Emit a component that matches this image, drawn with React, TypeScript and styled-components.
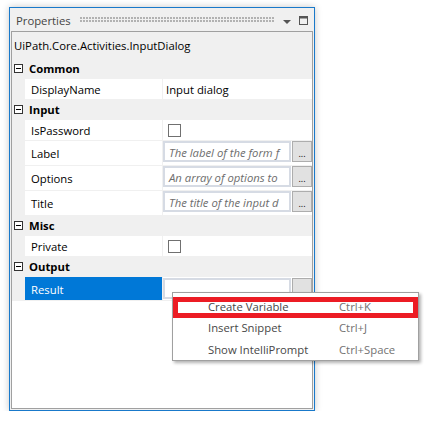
import React from 'react';
import styled, { createGlobalStyle } from 'styled-components';

const FONT = `"Open Sans", "Noto Sans", sans-serif`;

const Global = createGlobalStyle`
  html, body { margin: 0; padding: 0; background: #ffffff; }
  body { font-family: ${FONT}; font-size: 11.3px; color: #000; }
  * { box-sizing: border-box; }
`;

const Stage = styled.div`
  padding: 7px 0 0 9px;
`;

const Window = styled.div`
  position: relative;
  width: 306px;
  height: 404px;
  border: 1px solid #1979ca;
  background: #f0f0f0;
  box-shadow: 0 0 7px rgba(0, 0, 0, 0.22);
  display: flex;
  flex-direction: column;
  padding: 0 1px 1px 1px;
`;

const TitleBar = styled.div`
  height: 23px;
  display: flex;
  align-items: center;
  padding: 0 5px;
  flex-shrink: 0;
`;

const TitleText = styled.span`
  color: #444;
  white-space: nowrap;
  padding-top: 1px;
`;

const Grip = styled.div`
  flex: 1;
  height: 6px;
  margin: 1px 8px 0 9px;
  background-image: radial-gradient(circle at 1px 1px, #b0b0b0 0.7px, transparent 1.1px);
  background-size: 3px 3px;
`;

const TitleIcon = styled.svg`
  display: block;
  flex-shrink: 0;
`;

const Panel = styled.div`
  flex: 1;
  border: 1px solid #a0a0a0;
  background: #ffffff;
  display: flex;
  flex-direction: column;
`;

const ObjectHeader = styled.div`
  height: 26px;
  background: #f0f0f0;
  padding: 1px 0 0 2px;
  display: flex;
  align-items: center;
  white-space: nowrap;
`;

const Grid = styled.div`
  background: #f0f0f0;
  padding-bottom: 1px;
`;

const CategoryHeader = styled.div`
  height: 20px;
  display: flex;
  align-items: center;
  padding-left: 2px;
  font-weight: bold;
`;

const CategoryName = styled.span`
  margin-left: 6px;
  padding-top: 1px;
`;

const PropRow = styled.div<{ $h: number }>`
  display: grid;
  grid-template-columns: 137px 149px;
  column-gap: 1px;
  margin: 1px 0 0 13px;
  height: ${(p) => p.$h}px;
`;

const LabelCell = styled.div<{ $selected?: boolean }>`
  background: ${(p) => (p.$selected ? '#0078d7' : '#ffffff')};
  color: ${(p) => (p.$selected ? '#ffffff' : '#000000')};
  padding: 1px 0 0 6px;
  display: flex;
  align-items: center;
  white-space: nowrap;
`;

const ValueCell = styled.div<{ $top?: number }>`
  background: #ffffff;
  display: flex;
  align-items: ${(p) => (p.$top !== undefined ? 'flex-start' : 'center')};
  padding-top: ${(p) => p.$top ?? 0}px;
  white-space: nowrap;
  overflow: hidden;
`;

const ValueText = styled.span`
  padding: 1px 0 0 3px;
`;

const CheckBox = styled.div`
  width: 13px;
  height: 13px;
  border: 1px solid #707070;
  background: #fff;
  margin-left: 5px;
`;

const TextBox = styled.div`
  width: 128px;
  flex-shrink: 0;
  height: 21px;
  border: 2px solid #d6dbe4;
  background: #fff;
  padding: 1px 0 0 4px;
  display: flex;
  align-items: center;
  overflow: hidden;
  white-space: nowrap;
  font-style: italic;
  color: #6d6d6d;
`;

const EllipsisButton = styled.div`
  width: 20px;
  flex-shrink: 0;
  height: 21px;
  margin-left: 1px;
  border: 1px solid #adadad;
  background: #e1e1e1;
  display: flex;
  align-items: flex-end;
  justify-content: center;
  font-size: 9px;
  line-height: 12px;
  color: #000;
  padding-bottom: 1px;
`;

const Menu = styled.div`
  position: absolute;
  left: 162px;
  top: 284px;
  width: 247px;
  height: 69px;
  background: #fff;
  border: 1px solid #a0a0a0;
  box-shadow: 2px 2px 3px rgba(0, 0, 0, 0.3);
  padding-top: 1px;
  z-index: 5;
`;

const MenuItem = styled.div<{ $shift?: number }>`
  position: relative;
  z-index: 1;
  height: 22px;
  display: grid;
  grid-template-columns: 131px 1fr;
  align-items: center;
  padding: ${(p) => 1 + (p.$shift ?? 0)}px 0 0 35px;
  color: #474747;
  white-space: nowrap;
`;

const Shortcut = styled.span`
  color: #727272;
`;

const Highlight = styled.div`
  position: absolute;
  left: 0;
  top: 4px;
  width: 245px;
  height: 21px;
  border: 5px solid #ec1c24;
  pointer-events: none;
`;

const MinusBox = () => (
  <svg width="9" height="9" viewBox="0 0 9 9" style={{ display: 'block' }}>
    <rect x="0.5" y="0.5" width="8" height="8" fill="#fff" stroke="#333" />
    <line x1="2" y1="4.5" x2="7" y2="4.5" stroke="#000" />
  </svg>
);

type Prop =
  | { name: string; kind: 'text'; value: string }
  | { name: string; kind: 'check' }
  | { name: string; kind: 'expr'; placeholder: string; selected?: boolean };

const categories: { name: string; props: Prop[] }[] = [
  { name: 'Common', props: [{ name: 'DisplayName', kind: 'text', value: 'Input dialog' }] },
  {
    name: 'Input',
    props: [
      { name: 'IsPassword', kind: 'check' },
      { name: 'Label', kind: 'expr', placeholder: 'The label of the form f' },
      { name: 'Options', kind: 'expr', placeholder: 'An array of options to' },
      { name: 'Title', kind: 'expr', placeholder: 'The title of the input d' },
    ],
  },
  { name: 'Misc', props: [{ name: 'Private', kind: 'check' }] },
  { name: 'Output', props: [{ name: 'Result', kind: 'expr', placeholder: '', selected: true }] },
];

function PropertyRow({ p }: { p: Prop }) {
  if (p.kind === 'text') {
    return (
      <PropRow $h={20}>
        <LabelCell>{p.name}</LabelCell>
        <ValueCell>
          <ValueText>{p.value}</ValueText>
        </ValueCell>
      </PropRow>
    );
  }
  if (p.kind === 'check') {
    return (
      <PropRow $h={20}>
        <LabelCell>{p.name}</LabelCell>
        <ValueCell>
          <CheckBox />
        </ValueCell>
      </PropRow>
    );
  }
  return (
    <PropRow $h={p.selected ? 23 : 24}>
      <LabelCell $selected={p.selected}>{p.name}</LabelCell>
      <ValueCell $top={p.selected ? 1 : 0}>
        <TextBox>{p.placeholder}</TextBox>
        <EllipsisButton>...</EllipsisButton>
      </ValueCell>
    </PropRow>
  );
}

export default function App() {
  return (
    <>
      <Global />
      <Stage>
        <Window>
          <TitleBar>
            <TitleText>Properties</TitleText>
            <Grip />
            <TitleIcon width="8" height="4" viewBox="0 0 8 4" style={{ marginTop: 4 }}>
              <polygon points="0,0 8,0 4,4" fill="#555" />
            </TitleIcon>
            <TitleIcon width="9" height="9" viewBox="0 0 9 9" style={{ marginLeft: 8, marginTop: 1 }}>
              <rect x="0.5" y="0.5" width="8" height="8" fill="none" stroke="#555" />
              <rect x="0" y="0" width="9" height="2.5" fill="#555" />
            </TitleIcon>
          </TitleBar>
          <Panel>
            <ObjectHeader>UiPath.Core.Activities.InputDialog</ObjectHeader>
            <Grid>
              {categories.map((c) => (
                <React.Fragment key={c.name}>
                  <CategoryHeader>
                    <MinusBox />
                    <CategoryName>{c.name}</CategoryName>
                  </CategoryHeader>
                  {c.props.map((p) => (
                    <PropertyRow key={p.name} p={p} />
                  ))}
                </React.Fragment>
              ))}
            </Grid>
          </Panel>
          <Menu>
            <Highlight />
            <MenuItem $shift={2}>
              <span>Create Variable</span>
              <Shortcut>Ctrl+K</Shortcut>
            </MenuItem>
            <MenuItem>
              <span>Insert Snippet</span>
              <Shortcut>Ctrl+J</Shortcut>
            </MenuItem>
            <MenuItem>
              <span>Show IntelliPrompt</span>
              <Shortcut>Ctrl+Space</Shortcut>
            </MenuItem>
          </Menu>
        </Window>
      </Stage>
    </>
  );
}
